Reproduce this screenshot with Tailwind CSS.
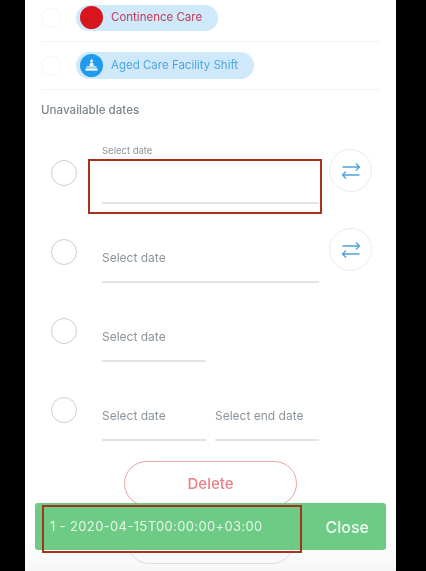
<!doctype html>
<html>
<head>
<meta charset="utf-8">
<script src="https://cdn.jsdelivr.net/npm/@tailwindcss/browser@4"></script>
</head>
<body class="bg-black font-['Inter','Liberation_Sans',sans-serif]">
<div class="relative w-[426px] h-[571px] overflow-hidden bg-black blur-[0.35px]">
  <main class="relative ml-[25px] w-[371px] h-[571px] overflow-hidden bg-white pl-[16px] pr-[16px]">
    <section class="pt-[4px]">
      <div class="flex items-center h-[27px]">
        <span class="w-[20px] h-[20px] rounded-full border border-[#f5f5f5]"></span>
        <div class="ml-[15px] flex items-center h-[26px] w-[142px] rounded-full bg-[#cfe9fb] pl-[4px]">
          <span class="w-[23px] h-[23px] rounded-full bg-[#d8141f]"></span>
          <span class="ml-[8px] text-[11.5px] text-[#c03a58]">Continence Care</span>
        </div>
      </div>
      <div class="mt-[10px] h-px bg-[#f3f3f3]"></div>
      <div class="mt-[10px] flex items-center h-[27px]">
        <span class="w-[20px] h-[20px] rounded-full border border-[#f5f5f5]"></span>
        <div class="ml-[15px] flex items-center h-[27px] w-[178px] rounded-full bg-[#cfe9fb] pl-[4px]">
          <span class="flex items-center justify-center w-[23px] h-[23px] rounded-full bg-[#1f9bee]">
            <svg width="15" height="15" viewBox="0 0 15 15" fill="white"><circle cx="7.6" cy="3" r="1.4"/><path d="M6.3 4.8h2.6l1 3.2H5.3z"/><path d="M2.5 8.3h10v1.3h-10z"/><path d="M1.5 10.4h12v2.2h-12z"/></svg>
          </span>
          <span class="ml-[8px] text-[11.5px] text-[#4fa6de]">Aged Care Facility Shift</span>
        </div>
      </div>
      <div class="mt-[10px] h-px bg-[#f3f3f3]"></div>
      <h2 class="mt-[13px] text-[11.6px] leading-[15px] font-medium text-[#7b858c]">Unavailable dates</h2>
    </section>

    <section class="mt-[29px] flex flex-col">
      <div class="relative h-[79px] flex">
        <span class="mt-[13px] ml-[10px] w-[26px] h-[26px] rounded-full border border-[#cfcfcf]"></span>
        <div class="ml-[25px] w-[217px] h-[57px] flex flex-col justify-between">
          <span class="text-[9.5px] leading-[12px] mt-[-2px] text-[#8b949b]">Select date</span>
          <span class="h-[2px] bg-[#e2e3e5]"></span>
        </div>
        <button class="ml-[10px] mt-[2px] w-[43px] h-[43px] rounded-full border border-[#e2eef5] flex items-center justify-center">
          <svg width="20" height="18" viewBox="0 0 20 18" fill="none" stroke="#4ea3dc" stroke-width="1.3"><path d="M1.5 5h17M15 1.5 18.5 5 15 8.5M18.5 13h-17M5 9.5 1.5 13 5 16.5"/></svg>
        </button>
      </div>
      <div class="relative h-[79px] flex">
        <span class="mt-[13px] ml-[10px] w-[26px] h-[26px] rounded-full border border-[#cfcfcf]"></span>
        <div class="ml-[25px] w-[217px] h-[57px] flex flex-col justify-end">
          <span class="text-[12px] leading-[16px] text-[#8b949b] mb-[15px]">Select date</span>
          <span class="h-[2px] bg-[#e2e3e5]"></span>
        </div>
        <button class="ml-[10px] mt-[2px] w-[43px] h-[43px] rounded-full border border-[#e2eef5] flex items-center justify-center">
          <svg width="20" height="18" viewBox="0 0 20 18" fill="none" stroke="#4ea3dc" stroke-width="1.3"><path d="M1.5 5h17M15 1.5 18.5 5 15 8.5M18.5 13h-17M5 9.5 1.5 13 5 16.5"/></svg>
        </button>
      </div>
      <div class="relative h-[79px] flex">
        <span class="mt-[13px] ml-[10px] w-[26px] h-[26px] rounded-full border border-[#cfcfcf]"></span>
        <div class="ml-[25px] w-[104px] h-[57px] flex flex-col justify-end">
          <span class="text-[12px] leading-[16px] text-[#8b949b] mb-[15px]">Select date</span>
          <span class="h-[2px] bg-[#e2e3e5]"></span>
        </div>
      </div>
      <div class="relative h-[79px] flex">
        <span class="mt-[13px] ml-[10px] w-[26px] h-[26px] rounded-full border border-[#cfcfcf]"></span>
        <div class="ml-[25px] w-[104px] h-[57px] flex flex-col justify-end">
          <span class="text-[12px] leading-[16px] text-[#8b949b] mb-[15px]">Select date</span>
          <span class="h-[2px] bg-[#e2e3e5]"></span>
        </div>
        <div class="ml-[9px] w-[104px] h-[57px] flex flex-col justify-end">
          <span class="text-[12px] leading-[16px] text-[#8b949b] mb-[15px]">Select end date</span>
          <span class="h-[2px] bg-[#e2e3e5]"></span>
        </div>
      </div>
    </section>

    <div class="absolute left-0 right-0 bottom-0 h-[30px] bg-gradient-to-b from-white to-[#f6f6f6]"></div>
    <button class="absolute left-[99px] top-[461px] w-[173px] h-[45px] rounded-full border border-[#eda3a3] bg-white pt-[2px] text-[15px] font-medium text-[#ea8085]">Delete</button>
    <div class="absolute left-[102px] top-[520px] w-[167px] h-[44px] rounded-full border border-[#dedede]"></div>
  </main>

  <div class="absolute left-[35px] top-[503px] w-[351px] h-[47px] rounded-[3px] bg-[#6dcb85] flex items-center justify-between pl-[15px] pr-[17px]">
    <span class="text-[13px] text-[#e7f6ea] tracking-[0.36px]">1 - 2020-04-15T00:00:00+03:00</span>
    <span class="text-[16px] font-medium text-[#eef9f0]">Close</span>
  </div>
  <div class="absolute left-[88px] top-[159px] w-[234px] h-[55px] border-2 border-[#a5331f]"></div>
  <div class="absolute left-[42px] top-[505px] w-[260px] h-[48px] border-2 border-[#a5331f]"></div>
</div>
</body>
</html>
